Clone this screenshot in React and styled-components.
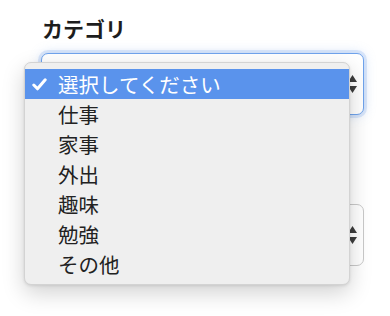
import React from "react";
import styled, { createGlobalStyle } from "styled-components";

const Global = createGlobalStyle`
  html, body { margin: 0; padding: 0; background: #ffffff; }
  body { font-family: "Noto Sans CJK JP", "Noto Sans", sans-serif; }
`;

const Page = styled.div`
  position: relative;
  width: 390px;
  height: 316px;
  padding: 14px 26px 0 41px;
  box-sizing: border-box;
  display: flex;
  flex-direction: column;
`;

const Label = styled.div`
  font-size: 21px;
  font-weight: 700;
  color: #1d1d1d;
  line-height: 28px;
  padding-left: 1px;
  margin-bottom: 11px;
`;

const SelectBox = styled.div`
  height: 62px;
  box-sizing: border-box;
  border: 1px solid ${(p) => (p.$focused ? "#6fa3ec" : "#c9c9c9")};
  border-radius: 7px;
  background: #fff;
  box-shadow: ${(p) =>
    p.$focused ? "0 0 0 3px rgba(120,165,235,0.22), 0 0 12px rgba(120,165,235,0.35)" : "none"};
  display: flex;
  align-items: center;
  justify-content: flex-end;
  padding-right: 5px;
  margin-bottom: ${(p) => p.$mb || 0}px;
`;

const Arrows = () => (
  <svg width="11" height="20" viewBox="0 0 11 20">
    <path d="M5.5 1 L10 8 L1 8 Z" fill="#3d3d3d" />
    <path d="M5.5 19 L10 12 L1 12 Z" fill="#3d3d3d" />
  </svg>
);

const Menu = styled.ul`
  position: absolute;
  left: 24px;
  top: 62px;
  width: 326px;
  margin: 0;
  padding: 6px 0 5px;
  box-sizing: border-box;
  list-style: none;
  background: #efefef;
  border: 1px solid #d3d3d3;
  border-radius: 7px;
  box-shadow: 0 8px 22px rgba(0, 0, 0, 0.18), 0 1px 3px rgba(0, 0, 0, 0.1);
`;

const Item = styled.li`
  height: 30px;
  display: flex;
  align-items: center;
  padding-left: 33px;
  position: relative;
  font-size: 20.5px;
  color: ${(p) => (p.$active ? "#ffffff" : "#222222")};
  background: ${(p) => (p.$active ? "#5a93ec" : "transparent")};
`;

const Check = styled.svg`
  position: absolute;
  left: 7px;
  top: 9px;
`;

const items = ["選択してください", "仕事", "家事", "外出", "趣味", "勉強", "その他"];

export default function App() {
  return (
    <>
      <Global />
      <Page>
        <Label>カテゴリ</Label>
        <SelectBox $focused $mb={89}>
          <Arrows />
        </SelectBox>
        <SelectBox>
          <Arrows />
        </SelectBox>
        <Menu>
          {items.map((t, i) => (
            <Item key={t} $active={i === 0}>
              {i === 0 && (
                <Check width="15" height="13" viewBox="0 0 15 13">
                  <path d="M1.8 7 L5.5 10.8 L13.2 1.8" fill="none" stroke="#fff" strokeWidth="3" strokeLinecap="round" strokeLinejoin="round" />
                </Check>
              )}
              {t}
            </Item>
          ))}
        </Menu>
      </Page>
    </>
  );
}
